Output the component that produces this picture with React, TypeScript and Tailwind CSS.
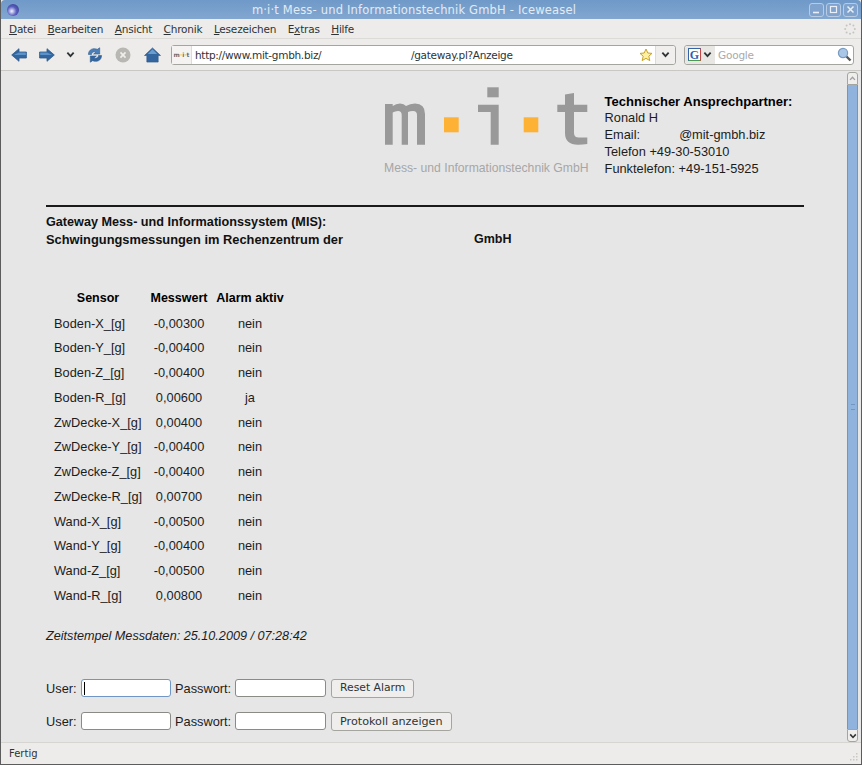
const MESSWERTE = [
  ['Boden-X_[g]', '-0,00300', 'nein'],
  ['Boden-Y_[g]', '-0,00400', 'nein'],
  ['Boden-Z_[g]', '-0,00400', 'nein'],
  ['Boden-R_[g]', '0,00600', 'ja'],
  ['ZwDecke-X_[g]', '0,00400', 'nein'],
  ['ZwDecke-Y_[g]', '-0,00400', 'nein'],
  ['ZwDecke-Z_[g]', '-0,00400', 'nein'],
  ['ZwDecke-R_[g]', '0,00700', 'nein'],
  ['Wand-X_[g]', '-0,00500', 'nein'],
  ['Wand-Y_[g]', '-0,00400', 'nein'],
  ['Wand-Z_[g]', '-0,00500', 'nein'],
  ['Wand-R_[g]', '0,00800', 'nein'],
];

const MENU = [
  ['D', 'atei'],
  ['B', 'earbeiten'],
  ['A', 'nsicht'],
  ['C', 'hronik'],
  ['L', 'esezeichen'],
  ['E', 'x', 'tras'],
  ['H', 'ilfe'],
];

function Chevron({ size = 9 }: { size?: number }) {
  return (
    <svg width={size} height={size} viewBox="0 0 10 10">
      <path d="M1.5 3 L5 6.8 L8.5 3" fill="none" stroke="#2e3436" strokeWidth="2" />
    </svg>
  );
}

function Pfeil({ rechts = false }: { rechts?: boolean }) {
  return (
    <svg width="16" height="14" viewBox="0 0 16 14" className={rechts ? 'scale-x-[-1]' : ''}>
      <path d="M0.7 7 L8 0.7 V4 H15.4 V10 H8 V13.3 Z" fill="#33669f" stroke="#2d5a8e" strokeWidth="0.8" />
      <path d="M8 4.6 H14.8 V7 H2.8 Z" fill="#5b92c9" />
    </svg>
  );
}

function Reload() {
  return (
    <svg width="16" height="16" viewBox="0 0 17 17">
      <path d="M1.5 8 C1.5 2.5 7 0.5 11 2.5 L13.5 0.8 V7.5 H7 L9.5 5.4 C7 4.4 5 5.5 4.8 8 Z" fill="#4a7fb8" stroke="#2d5a8e" strokeWidth="0.6" />
      <path d="M15.5 9 C15.5 14.5 10 16.5 6 14.5 L3.5 16.2 V9.5 H10 L7.5 11.6 C10 12.6 12 11.5 12.2 9 Z" fill="#33669f" stroke="#2d5a8e" strokeWidth="0.6" />
    </svg>
  );
}

function Stop() {
  return (
    <svg width="16" height="16" viewBox="0 0 17 17">
      <circle cx="8.5" cy="8.5" r="8" fill="#b9b7b3" />
      <path d="M5.8 5.8 L11.2 11.2 M11.2 5.8 L5.8 11.2" stroke="#eeeeec" strokeWidth="1.8" />
    </svg>
  );
}

function Home() {
  return (
    <svg width="17" height="16" viewBox="0 0 18 17">
      <path d="M9 1 L17.5 9 H15 V16 H3 V9 H0.5 Z" fill="#33669f" stroke="#2d5a8e" strokeWidth="0.7" />
      <path d="M9 2.5 L14 7.5 H4 Z" fill="#6a9dd0" />
    </svg>
  );
}

function Stern() {
  return (
    <svg width="14" height="14" viewBox="0 0 14 14">
      <path d="M7 1 L8.8 5 L13 5.4 L9.8 8.2 L10.8 12.6 L7 10.3 L3.2 12.6 L4.2 8.2 L1 5.4 L5.2 5 Z" fill="#fdf0a0" stroke="#c9a227" strokeWidth="1" />
    </svg>
  );
}

function Lupe() {
  return (
    <svg width="15" height="15" viewBox="0 0 15 15">
      <path d="M9 9 L13.5 13.5" stroke="#555753" strokeWidth="2.4" />
      <circle cx="6" cy="6" r="4.6" fill="#a9c6e6" stroke="#7a9cc0" strokeWidth="1.2" />
    </svg>
  );
}

function Spinner() {
  return (
    <svg width="12" height="12" viewBox="0 0 12 12" fill="#c4c4c0">
      <circle cx="6" cy="1.2" r="1" />
      <circle cx="9.4" cy="2.6" r="1" />
      <circle cx="10.8" cy="6" r="1" />
      <circle cx="9.4" cy="9.4" r="1" />
      <circle cx="6" cy="10.8" r="1" />
      <circle cx="2.6" cy="9.4" r="1" />
      <circle cx="1.2" cy="6" r="1" />
      <circle cx="2.6" cy="2.6" r="1" />
    </svg>
  );
}

function Griff() {
  return (
    <svg width="11" height="9" viewBox="0 0 11 9" fill="#c9c8c4">
      <rect x="8" y="0" width="1.5" height="1.5" />
      <rect x="5" y="3" width="1.5" height="1.5" />
      <rect x="8" y="3" width="1.5" height="1.5" />
      <rect x="2" y="6" width="1.5" height="1.5" />
      <rect x="5" y="6" width="1.5" height="1.5" />
      <rect x="8" y="6" width="1.5" height="1.5" />
    </svg>
  );
}

function FensterKnopf({ art }: { art: 'min' | 'max' | 'zu' }) {
  return (
    <div className="flex h-[14px] w-[15px] items-center justify-center rounded-[3px] border border-[#b7cce4] bg-[#7fa3cd]">
      <svg width="9" height="9" viewBox="0 0 9 9">
        {art === 'min' && <path d="M1 7.5 H7" stroke="#e8eff7" strokeWidth="1.6" />}
        {art === 'max' && <rect x="1.5" y="1.5" width="6" height="6" fill="none" stroke="#e8eff7" strokeWidth="1.2" />}
        {art === 'zu' && <path d="M1.5 1.5 L7.5 7.5 M7.5 1.5 L1.5 7.5" stroke="#e8eff7" strokeWidth="1.5" />}
      </svg>
    </div>
  );
}

function Logo() {
  return (
    <svg width="204" height="60" viewBox="0 0 204 60" className="block">
      <g fill="#999999">
        <path d="M1 18 H8.7 V20 Q12 17.5 16 17.5 Q20 17.5 22 20 Q26 17.5 31 17.5 Q41 17.5 41 28 V58.7 H33 V29 Q33 25 29 25 Q26 25 24 26 V58.7 H17.7 V29 Q17.7 25 14 25 Q11 25 8.7 26.5 V58.7 H1 Z" />
        <rect x="103.3" y="1.3" width="11.4" height="10" />
        <path d="M94 18.7 H114.7 V58.7 H106.7 V26 H94 Z" />
        <path d="M181 8.5 L190 7 V18.7 H203.3 V26 H190 V47 Q190 51.5 195 51.5 H203.3 V58 Q199 58.7 194 58.7 Q181 58.7 181 47 V26 H173.3 V18.7 H181 Z" />
      </g>
      <rect x="60" y="31.3" width="14.7" height="15" fill="#fdb135" />
      <rect x="139.7" y="31.3" width="14.6" height="15" fill="#fdb135" />
    </svg>
  );
}

function Formular({ knopf, knopfGross = false, fokus = false }: { knopf: string; knopfGross?: boolean; fokus?: boolean }) {
  const feld = 'h-[18px] rounded-[3px] border bg-white';
  return (
    <div className="flex h-[33px] items-center">
      <span className="w-[35px]">User:</span>
      <div className={`flex w-[90px] items-center ${feld} ${fokus ? 'border-[#6f96c4]' : 'border-[#8a8a86]'}`}>
        {fokus && <div className="ml-[2px] h-[13px] w-px bg-black" />}
      </div>
      <span className="ml-[4px] w-[60px]">Passwort:</span>
      <div className={`w-[91px] ${feld} border-[#8a8a86]`} />
      <button className={`ml-[5px] h-[19px] rounded-[3px] border border-[#a5a5a0] bg-[#efeeec] px-[8px] font-['DejaVu_Sans',sans-serif] leading-none text-[#2e3436] ${knopfGross ? 'text-[11.2px]' : 'text-[10.8px]'}`}>
        {knopf}
      </button>
    </div>
  );
}

export default function App() {
  return (
    <div className="flex h-[765px] w-[862px] flex-col overflow-hidden border-x border-b border-[#5c5c5c] bg-[#edecea] font-['DejaVu_Sans',sans-serif] text-[10.5px] text-[#2e3436]">
      {/* Titelleiste */}
      <div className="flex h-[19px] shrink-0 items-center justify-between rounded-t-[4px] bg-gradient-to-b from-[#6f99c8] to-[#82a7d0] pl-[6px] pr-[3px]">
        <div className="h-[12px] w-[12px] rounded-full bg-[radial-gradient(circle_at_40%_60%,#f4f4ff_0%,#5b5fc0_45%,#2b2f80_100%)]" />
        <span className="pt-[2px] text-[11.5px] tracking-[0.18px] text-[#e3ebf4]">
          m·i·t Mess- und Informationstechnik GmbH - Iceweasel
        </span>
        <div className="flex gap-[2px]">
          <FensterKnopf art="min" />
          <FensterKnopf art="max" />
          <FensterKnopf art="zu" />
        </div>
      </div>

      {/* Menue */}
      <div className="flex h-[20px] shrink-0 items-center justify-between border-b border-[#dcdbd8] pl-[8px] pr-[5px]">
        <div className="flex gap-[11.5px] pt-[2px] tracking-[-0.2px]">
          {MENU.map((m) => (
            <span key={m.join('')}>
              {m.length === 3 ? (
                <>
                  {m[0]}
                  <span className="underline">{m[1]}</span>
                  {m[2]}
                </>
              ) : (
                <>
                  <span className="underline">{m[0]}</span>
                  {m[1]}
                </>
              )}
            </span>
          ))}
        </div>
        <Spinner />
      </div>

      {/* Navigation */}
      <div className="flex h-[32px] shrink-0 items-center border-b border-[#c9c8c4] pl-[10px]">
        <Pfeil />
        <div className="ml-[12px]">
          <Pfeil rechts />
        </div>
        <div className="ml-[11px]">
          <Chevron />
        </div>
        <div className="ml-[12px]">
          <Reload />
        </div>
        <div className="ml-[12px]">
          <Stop />
        </div>
        <div className="ml-[13px]">
          <Home />
        </div>
        <div className="ml-[10px] flex h-[20px] w-[505px] items-center rounded-[3px] border border-[#a5a5a0] bg-white">
          <div className="flex h-full w-[20px] items-center justify-center border-r border-[#dcdbd8] bg-[#f4f3f1] text-[6px] font-bold text-[#6b6b6b]">
            m<span className="text-[#fdb135]">·</span>i<span className="text-[#fdb135]">·</span>t
          </div>
          <span className="ml-[3px] w-[216px] whitespace-nowrap pt-[2px] tracking-[-0.3px]">http://www.mit-gmbh.biz/</span>
          <span className="pt-[2px] tracking-[-0.3px]">/gateway.pl?Anzeige</span>
          <div className="ml-auto mr-[2px] flex items-center">
            <Stern />
          </div>
          <div className="flex h-full w-[20px] items-center justify-center rounded-r-[3px] border-l border-[#dcdbd8] bg-[#f0efed]">
            <Chevron />
          </div>
        </div>
        <div className="ml-[8px] flex h-[20px] w-[170px] items-center rounded-[3px] border border-[#a5a5a0] bg-white">
          <div className="flex h-full items-center gap-[2px] rounded-l-[3px] bg-[#e8e7e4] px-[3px]">
            <div className="flex h-[13px] w-[13px] items-center justify-center border border-[#3465a4] border-b-[#4e9a4e] border-r-[#cc4444] bg-white font-['Liberation_Serif',serif] text-[12px] font-bold leading-none text-[#2f5fb3]">
              G
            </div>
            <Chevron />
          </div>
          <span className="ml-[3px] pt-[2px] tracking-[-0.2px] text-[#aaaaaa]">Google</span>
          <div className="ml-auto mr-px">
            <Lupe />
          </div>
        </div>
      </div>

      {/* Inhalt */}
      <div className="flex min-h-0 flex-1">
        <div className="min-w-0 flex-1 bg-[#e6e6e6] font-['Liberation_Sans',sans-serif] text-[12.8px] text-[#1c1c1c]">
          <div className="flex pt-[15px]">
            <div className="ml-[383px] shrink-0">
              <Logo />
              <div className="mt-[15px] whitespace-nowrap text-[12.2px] leading-[14px] text-[#a6a6a6]">
                Mess- und Informationstechnik GmbH
              </div>
            </div>
            <div className="ml-[16px] whitespace-nowrap pt-[7.5px] leading-[16.8px]">
              <div className="text-[13px] font-bold text-black">Technischer Ansprechpartner:</div>
              <div>Ronald H</div>
              <div>
                Email:<span className="ml-[39px]">@mit-gmbh.biz</span>
              </div>
              <div>Telefon +49-30-53010</div>
              <div>Funktelefon: +49-151-5925</div>
            </div>
          </div>

          <div className="ml-[45px] mt-[28px] h-[2px] w-[758px] bg-[#1a1a1a]" />

          <div className="ml-[45px] mt-[6.5px] font-bold leading-[17px] text-[#111111]">
            <div className="text-[12.65px]">Gateway Mess- und Informationssystem (MIS):</div>
            <div className="flex text-[12.85px]">
              <span className="w-[428px]">Schwingungsmessungen im Rechenzentrum der</span>
              <span className="text-[12.5px]">GmbH</span>
            </div>
          </div>

          <div className="ml-[53px] mt-[38px]">
            <div className="flex h-[24.8px] items-center text-center text-[12.5px] font-bold text-black">
              <span className="w-[88px]">Sensor</span>
              <span className="ml-[8px] w-[58px]">Messwert</span>
              <span className="ml-[8px] w-[68px]">Alarm aktiv</span>
            </div>
            {MESSWERTE.map(([sensor, wert, alarm]) => (
              <div key={sensor} className="flex h-[24.75px] items-center whitespace-nowrap">
                <span className="w-[88px]">{sensor}</span>
                <span className="ml-[8px] w-[58px] text-center">{wert}</span>
                <span className="ml-[8px] w-[68px] text-center">{alarm}</span>
              </div>
            ))}
          </div>

          <div className="ml-[45px] mt-[19px] text-[12.65px] italic">Zeitstempel Messdaten: 25.10.2009 / 07:28:42</div>

          <div className="ml-[45px] mt-[26px]">
            <Formular knopf="Reset Alarm" fokus />
            <Formular knopf="Protokoll anzeigen" knopfGross />
          </div>
        </div>

        {/* Scrollbar */}
        <div className="flex w-[14px] shrink-0 flex-col bg-[#e6e6e6] pr-[3px] pt-px">
          <div className="flex h-[13px] items-center justify-center rounded-t-[3px] border border-[#a5a5a0] bg-[#efeeec]">
            <div className="rotate-180 opacity-40">
              <Chevron size={7} />
            </div>
          </div>
          <div className="flex flex-1 items-center justify-center border-x border-[#6f96c4] bg-[#8fb3dd]">
            <div className="h-[6px] w-[4px] border-y border-[#6f96c4]" />
          </div>
          <div className="flex h-[13px] items-center justify-center rounded-b-[3px] border border-[#a5a5a0] bg-[#efeeec]">
            <Chevron size={8} />
          </div>
        </div>
      </div>

      {/* Statusleiste */}
      <div className="flex h-[22px] shrink-0 items-center justify-between border-t border-[#d6d5d2] pl-[8px] pr-[2px] text-[10px]">
        <span>Fertig</span>
        <div className="self-end pb-[2px]">
          <Griff />
        </div>
      </div>
    </div>
  );
}
